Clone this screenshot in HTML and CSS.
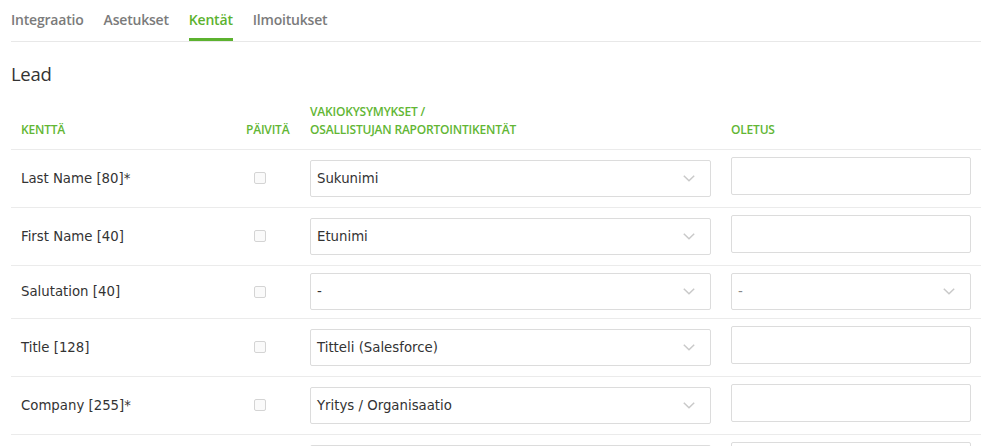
FILE: index.html
```html
<!DOCTYPE html>
<html lang="fi">
<head>
  <meta charset="UTF-8" />
  <meta name="viewport" content="width=device-width, initial-scale=1" />
  <title>Kentät</title>
  <link rel="stylesheet" href="styles.css">
</head>
<body>
  <div class="page">
    <nav class="tabs">
      <a class="tab">Integraatio</a>
      <a class="tab">Asetukset</a>
      <a class="tab active">Kentät</a>
      <a class="tab">Ilmoitukset</a>
    </nav>

    <h2 class="section-title">Lead</h2>

    <table class="fields">
      <thead>
        <tr>
          <th class="col-field">Kenttä</th>
          <th class="col-update">Päivitä</th>
          <th class="col-map">Vakiokysymykset /<br>Osallistujan raportointikentät</th>
          <th class="col-default">Oletus</th>
        </tr>
      </thead>
      <tbody>
        <tr>
          <td>Last Name [80]*</td>
          <td><span class="check"></span></td>
          <td><div class="select"><span>Sukunimi</span><svg width="12" height="7" viewBox="0 0 12 7"><polyline points="0.8,0.8 6,5.8 11.2,0.8" /></svg></div></td>
          <td><div class="input"></div></td>
        </tr>
        <tr>
          <td>First Name [40]</td>
          <td><span class="check"></span></td>
          <td><div class="select"><span>Etunimi</span><svg width="12" height="7" viewBox="0 0 12 7"><polyline points="0.8,0.8 6,5.8 11.2,0.8" /></svg></div></td>
          <td><div class="input"></div></td>
        </tr>
        <tr>
          <td>Salutation [40]</td>
          <td><span class="check"></span></td>
          <td><div class="select"><span>-</span><svg width="12" height="7" viewBox="0 0 12 7"><polyline points="0.8,0.8 6,5.8 11.2,0.8" /></svg></div></td>
          <td><div class="select"><span class="muted">-</span><svg width="12" height="7" viewBox="0 0 12 7"><polyline points="0.8,0.8 6,5.8 11.2,0.8" /></svg></div></td>
        </tr>
        <tr>
          <td>Title [128]</td>
          <td><span class="check"></span></td>
          <td><div class="select"><span>Titteli (Salesforce)</span><svg width="12" height="7" viewBox="0 0 12 7"><polyline points="0.8,0.8 6,5.8 11.2,0.8" /></svg></div></td>
          <td><div class="input"></div></td>
        </tr>
        <tr>
          <td>Company [255]*</td>
          <td><span class="check"></span></td>
          <td><div class="select"><span>Yritys / Organisaatio</span><svg width="12" height="7" viewBox="0 0 12 7"><polyline points="0.8,0.8 6,5.8 11.2,0.8" /></svg></div></td>
          <td><div class="input"></div></td>
        </tr>
        <tr>
          <td></td>
          <td></td>
          <td><div class="select"><span></span><svg width="12" height="7" viewBox="0 0 12 7"><polyline points="0.8,0.8 6,5.8 11.2,0.8" /></svg></div></td>
          <td><div class="input"></div></td>
        </tr>
      </tbody>
    </table>
  </div>
</body>
</html>
```

FILE: styles.css
```css
body {
  margin: 0;
  background: #fff;
  font-family: "Open Sans", Arial, sans-serif;
  color: #333;
}
.page {
  width: 970px;
  margin-left: 11px;
}
.tabs {
  display: flex;
  gap: 20px;
  border-bottom: 1px solid #e8e8e8;
}
.tab {
  font-size: 14px;
  font-weight: 600;
  line-height: 20px;
  color: #7b7b7b;
  padding: 10px 0 8px 0;
  border-bottom: 3px solid transparent;
  letter-spacing: -0.2px;
}
.tab.active {
  color: #5cb22f;
  border-bottom-color: #5cb22f;
}
.section-title {
  font-size: 18.5px;
  font-weight: 400;
  line-height: 24px;
  margin: 20px 0 7px 0;
  color: #333;
  letter-spacing: -0.3px;
}
.fields {
  width: 970px;
  border-collapse: collapse;
  table-layout: fixed;
}
.fields th {
  text-align: left;
  vertical-align: bottom;
  font-size: 12px;
  font-weight: 600;
  line-height: 18px;
  letter-spacing: -0.2px;
  text-transform: uppercase;
  color: #62b634;
  padding: 10px;
  border-bottom: 1px solid #ebebeb;
}
.col-field { width: 205px; }
.col-update { width: 44px; }
.col-map { width: 401px; }
.fields td {
  padding: 7px 10px 8px 10px;
  vertical-align: middle;
  font-family: "DejaVu Sans", Verdana, sans-serif;
  font-size: 13.3px;
  color: #333;
  border-bottom: 1px solid #ebebeb;
}
.check {
  display: block;
  width: 10px;
  height: 10px;
  margin-left: 8px;
  border: 1px solid #d4d4d4;
  border-radius: 2px;
  background: #fafafa;
}
.select {
  box-sizing: border-box;
  height: 37px;
  border: 1px solid #dcdcdc;
  border-radius: 2px;
  padding: 0 15px 0 6px;
  display: flex;
  align-items: center;
  justify-content: space-between;
}
.select svg polyline {
  fill: none;
  stroke: #c9c9c9;
  stroke-width: 1.5;
}
.muted {
  color: #888;
}
.input {
  box-sizing: border-box;
  height: 38px;
  margin-bottom: 4px;
  border: 1px solid #dcdcdc;
  border-radius: 2px;
}
```
